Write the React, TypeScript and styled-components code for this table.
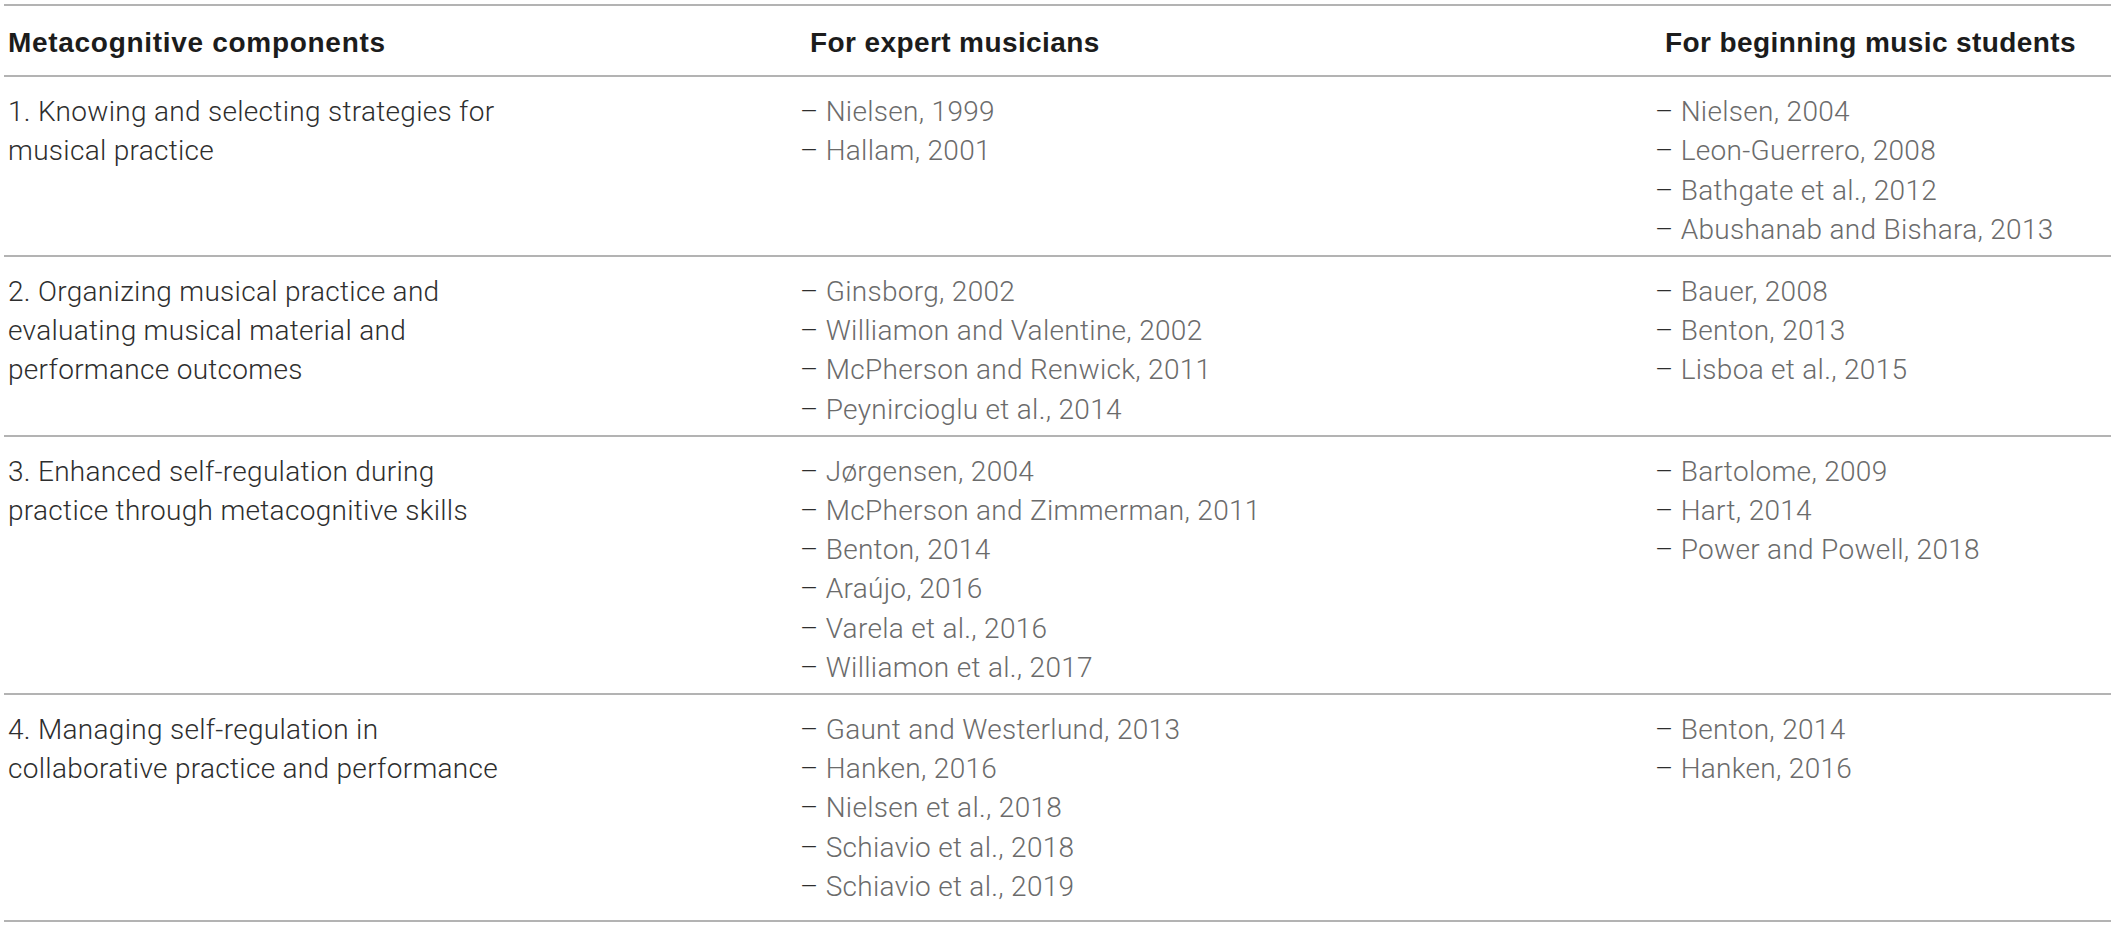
import React from "react";
import styled, { createGlobalStyle } from "styled-components";

const Global = createGlobalStyle`
  html, body { margin: 0; padding: 0; background: #ffffff; }
  body { font-family: "Roboto", "Liberation Sans", Arial, sans-serif; }
`;

const Table = styled.div`
  margin: 4px 6px 0 4px;
  width: 2107px;
  border-top: 2px solid #b3b3b3;
`;

const Row = styled.div<{ $head?: boolean; $last?: boolean }>`
  display: grid;
  grid-template-columns: 792px 855px 1fr;
  border-bottom: 2px solid #b3b3b3;
  padding: ${(p) => (p.$head ? "17px 0 13px" : p.$last ? "15px 0 14px" : "15px 0 6px")};
`;

const HeadCell = styled.div<{ $shift?: number; $spacing?: number }>`
  padding-left: ${(p) => 4 + (p.$shift ?? 0)}px;
  font-family: "Liberation Sans", Arial, sans-serif;
  font-weight: 700;
  font-size: 28px;
  letter-spacing: ${(p) => p.$spacing ?? 0.4}px;
  line-height: 39.2px;
  color: #1c1c1c;
  white-space: nowrap;
`;

const Cell = styled.div`
  padding-left: 4px;
  display: flex;
  flex-direction: column;
`;

const Line = styled.div<{ $tone: "dark" | "light" }>`
  font-family: "Roboto", "Liberation Sans", Arial, sans-serif;
  font-weight: 300;
  font-size: 28px;
  letter-spacing: 0.3px;
  line-height: 39.2px;
  color: ${(p) => (p.$tone === "dark" ? "#2e2e2e" : "#6b6b6b")};
  white-space: nowrap;
`;

const Dash = styled.span`
  color: #2e2e2e;
`;

type RowData = { comp: string[]; expert: string[]; beginner: string[] };

const rows: RowData[] = [
  {
    comp: ["1. Knowing and selecting strategies for", "musical practice"],
    expert: ["Nielsen, 1999", "Hallam, 2001"],
    beginner: ["Nielsen, 2004", "Leon-Guerrero, 2008", "Bathgate et al., 2012", "Abushanab and Bishara, 2013"],
  },
  {
    comp: ["2. Organizing musical practice and", "evaluating musical material and", "performance outcomes"],
    expert: ["Ginsborg, 2002", "Williamon and Valentine, 2002", "McPherson and Renwick, 2011", "Peynircioglu et al., 2014"],
    beginner: ["Bauer, 2008", "Benton, 2013", "Lisboa et al., 2015"],
  },
  {
    comp: ["3. Enhanced self-regulation during", "practice through metacognitive skills"],
    expert: [
      "Jørgensen, 2004",
      "McPherson and Zimmerman, 2011",
      "Benton, 2014",
      "Araújo, 2016",
      "Varela et al., 2016",
      "Williamon et al., 2017",
    ],
    beginner: ["Bartolome, 2009", "Hart, 2014", "Power and Powell, 2018"],
  },
  {
    comp: ["4. Managing self-regulation in", "collaborative practice and performance"],
    expert: [
      "Gaunt and Westerlund, 2013",
      "Hanken, 2016",
      "Nielsen et al., 2018",
      "Schiavio et al., 2018",
      "Schiavio et al., 2019",
    ],
    beginner: ["Benton, 2014", "Hanken, 2016"],
  },
];

const RefList: React.FC<{ items: string[] }> = ({ items }) => (
  <Cell>
    {items.map((t) => (
      <Line key={t} $tone="light">
        <Dash>–</Dash> {t}
      </Line>
    ))}
  </Cell>
);

export default function App() {
  return (
    <>
      <Global />
      <Table>
        <Row $head>
          <HeadCell $spacing={0.7}>Metacognitive components</HeadCell>
          <HeadCell $shift={10}>For expert musicians</HeadCell>
          <HeadCell $shift={10}>For beginning music students</HeadCell>
        </Row>
        {rows.map((r, i) => (
          <Row key={i} $last={i === rows.length - 1}>
            <Cell>
              {r.comp.map((l) => (
                <Line key={l} $tone="dark">
                  {l}
                </Line>
              ))}
            </Cell>
            <RefList items={r.expert} />
            <RefList items={r.beginner} />
          </Row>
        ))}
      </Table>
    </>
  );
}
